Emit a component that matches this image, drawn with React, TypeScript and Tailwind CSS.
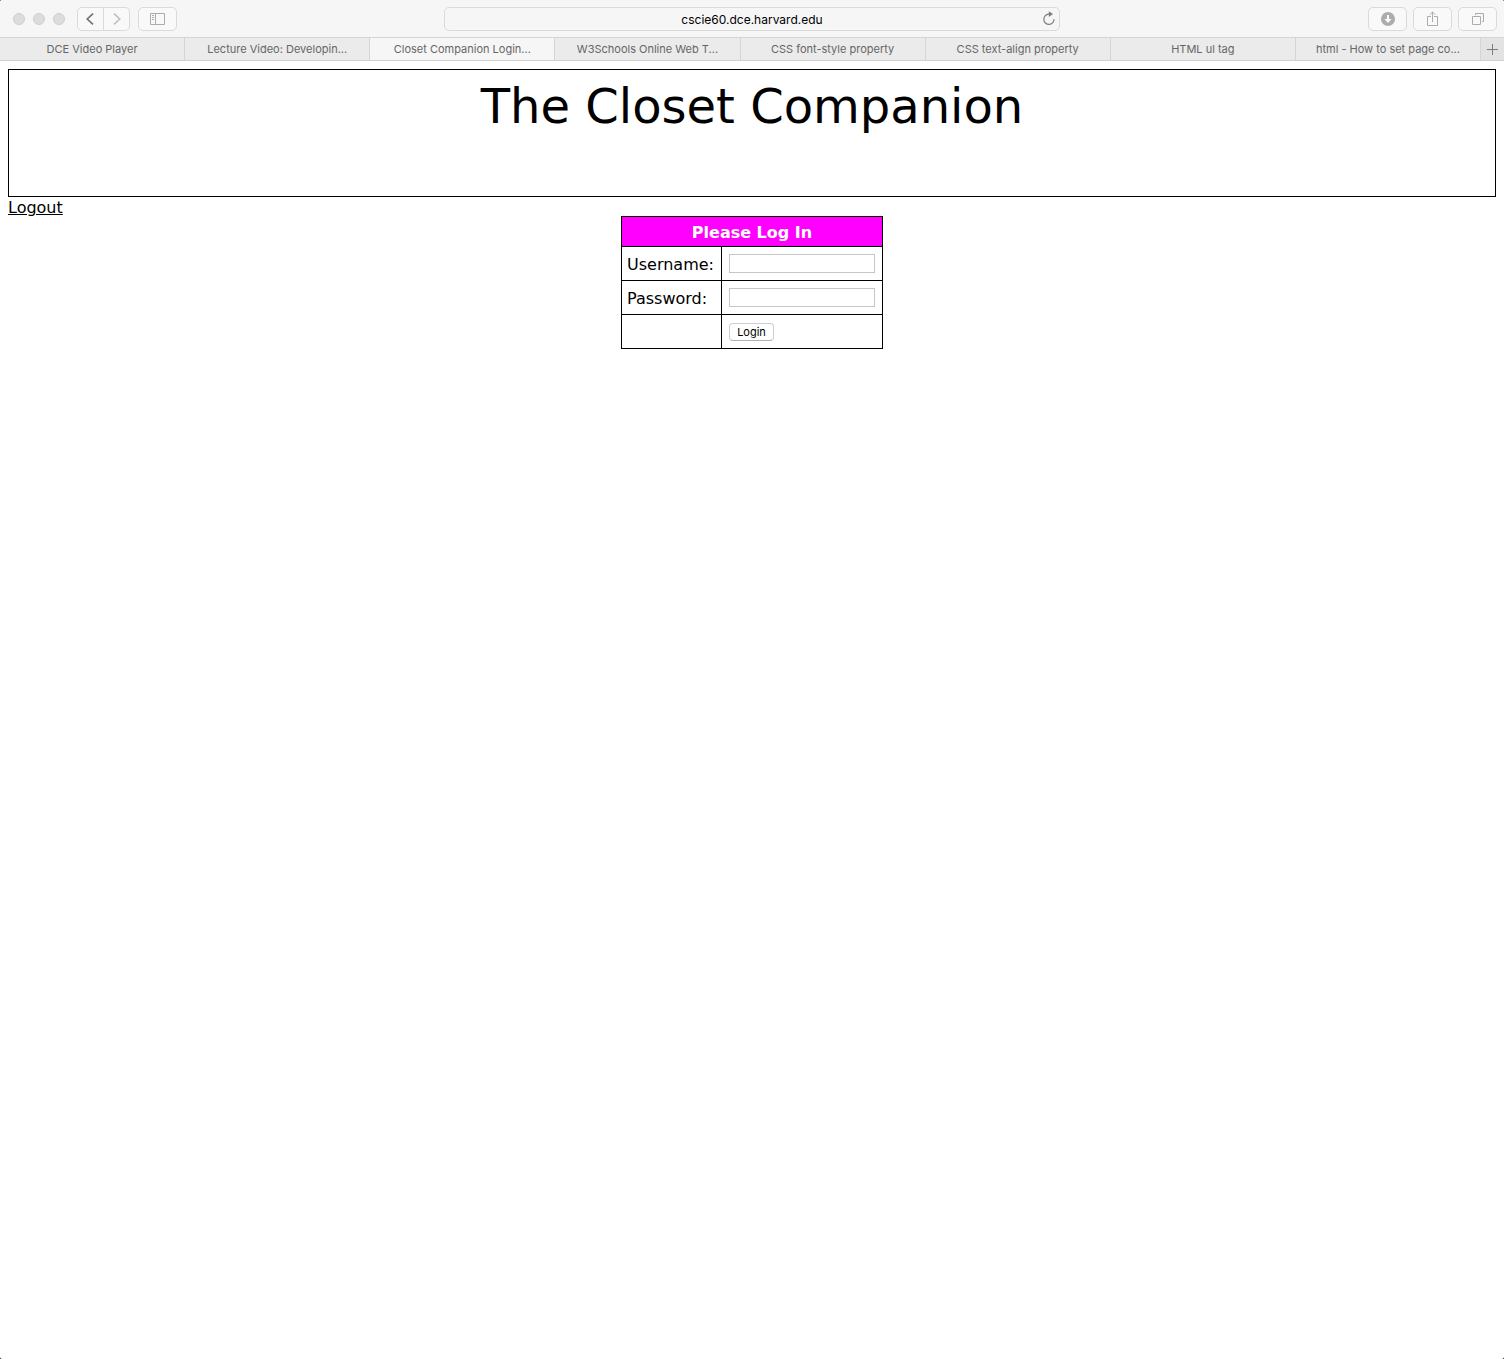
import type { ReactNode } from "react";

const tabs = [
  "DCE Video Player",
  "Lecture Video: Developin...",
  "Closet Companion Login...",
  "W3Schools Online Web T...",
  "CSS font-style property",
  "CSS text-align property",
  "HTML ul tag",
  "html - How to set page co...",
];

const activeTab = 2;

function ToolButton({ label, className, children }: { label: string; className: string; children: ReactNode }) {
  return (
    <button
      type="button"
      aria-label={label}
      className={`flex h-6 items-center justify-center border border-[#dadada] bg-[#f9f9f9] ${className}`}
    >
      {children}
    </button>
  );
}

function Toolbar() {
  return (
    <div className="grid grid-cols-[1fr_41%_1fr] items-center border-b border-[#d5d5d5] bg-[#f6f6f6] pt-[7px] pb-1.5">
      <div className="flex items-center pl-[13px]">
        <div className="flex gap-2">
          <span className="size-3 rounded-full border border-[#cfcfcf] bg-[#dcdcdc]" />
          <span className="size-3 rounded-full border border-[#cfcfcf] bg-[#dcdcdc]" />
          <span className="size-3 rounded-full border border-[#cfcfcf] bg-[#dcdcdc]" />
        </div>
        <div className="ml-3 flex">
          <ToolButton label="Back" className="w-[27px] rounded-l-[5px]">
            <svg width="9" height="12" viewBox="0 0 9 12" fill="none" stroke="#6f6f6f" strokeWidth="1.6">
              <path d="M7 .6 1.2 6 7 11.4" />
            </svg>
          </ToolButton>
          <ToolButton label="Forward" className="w-[26px] rounded-r-[5px] border-l-0">
            <svg width="8" height="12" viewBox="0 0 8 12" fill="none" stroke="#bebebe" strokeWidth="1.5">
              <path d="M1 .6 6.8 6 1 11.4" />
            </svg>
          </ToolButton>
        </div>
        <ToolButton label="Show sidebar" className="ml-2 w-[39px] rounded-[5px]">
          <svg width="15" height="12" viewBox="0 0 15 12" fill="none" stroke="#acacac">
            <path d="M.5.5h14v11H.5zM5.5.5v11M2 2.5h2M2 4.5h2M2 6.5h2" />
          </svg>
        </ToolButton>
      </div>

      <div className="relative">
        <input
          type="text"
          aria-label="Address"
          defaultValue="cscie60.dce.harvard.edu"
          className="block h-6 w-full rounded-[5px] border border-[#dadada] bg-[#f6f6f6] text-center text-xs text-black outline-none"
        />
        <button type="button" aria-label="Reload" className="absolute top-1 right-1">
          <svg width="14" height="15" viewBox="0 0 14 15" fill="none">
            <path d="M8 3.2H6.6A5.1 5.1 0 1 0 12 8.2" stroke="#7c7c7c" strokeWidth="1.2" />
            <path d="M6.8.3v5.6l4.2-2.8z" fill="#7c7c7c" />
          </svg>
        </button>
      </div>

      <div className="flex justify-end gap-1.5 pr-[7px]">
        <ToolButton label="Downloads" className="w-[39px] rounded-[5px]">
          <svg width="14" height="14" viewBox="0 0 14 14">
            <circle cx="7" cy="7" r="7" fill="#acacac" />
            <path d="M6 3h2v4h2.6L7 11 3.4 7H6z" fill="#fafafa" />
          </svg>
        </ToolButton>
        <ToolButton label="Share" className="w-[39px] rounded-[5px]">
          <svg width="13" height="16" viewBox="0 0 13 16" fill="none" stroke="#acacac">
            <path d="M5 5.5H1.5v9h10v-9H8M6.5 11V1M3.8 3.7 6.5 1l2.7 2.7" />
          </svg>
        </ToolButton>
        <ToolButton label="Show all tabs" className="w-[39px] rounded-[5px]">
          <svg width="13" height="12" viewBox="0 0 13 12" fill="none" stroke="#acacac">
            <path d="M1.5 3.5h8v8h-8zM4.5 2V.5h8v8H11" />
          </svg>
        </ToolButton>
      </div>
    </div>
  );
}

function TabBar() {
  return (
    <div className="flex h-[23px] border-b border-[#d0d0d0] bg-[#ebebeb] text-[11px] text-[#666666]">
      {tabs.map((tab, i) => (
        <button
          key={tab}
          type="button"
          className={`min-w-0 flex-1 truncate border-r border-[#d5d5d5] px-1 ${i === activeTab ? "bg-[#f6f6f6]" : "bg-[#ebebeb]"}`}
        >
          {tab}
        </button>
      ))}
      <button type="button" aria-label="New tab" className="flex w-[23px] items-center justify-center bg-[#e3e3e3]">
        <svg width="11" height="11" viewBox="0 0 11 11" stroke="#7c7c7c">
          <path d="M5.5 0v11M0 5.5h11" />
        </svg>
      </button>
    </div>
  );
}

function LoginForm() {
  return (
    <form onSubmit={(e) => e.preventDefault()}>
      <table className="mx-auto border-collapse border border-black">
        <thead>
          <tr className="h-[30px]">
            <th colSpan={2} className="border border-black bg-[#ff00ff] pt-0.5 text-base font-bold text-white">
              Please Log In
            </th>
          </tr>
        </thead>
        <tbody>
          <tr className="h-[34px]">
            <td className="w-[100px] border border-black pt-0.5 pl-[5px]">
              <label htmlFor="username">Username:</label>
            </td>
            <td className="border border-black px-[7px]">
              <input id="username" type="text" className="block h-[19px] w-[146px] border border-[#c6c6c6] px-1 text-[11px]" />
            </td>
          </tr>
          <tr className="h-[34px]">
            <td className="border border-black pt-0.5 pl-[5px]">
              <label htmlFor="password">Password:</label>
            </td>
            <td className="border border-black px-[7px]">
              <input id="password" type="password" className="block h-[19px] w-[146px] border border-[#c6c6c6] px-1 text-[11px]" />
            </td>
          </tr>
          <tr className="h-[34px]">
            <td className="border border-black" />
            <td className="border border-black px-[7px]">
              <button
                type="submit"
                className="block h-[18px] w-[45px] rounded border border-[#cecece] border-b-[#b2b2b2] bg-white font-['Inter',sans-serif] text-[11px] leading-4"
              >
                Login
              </button>
            </td>
          </tr>
        </tbody>
      </table>
    </form>
  );
}

export default function App() {
  return (
    <div className="min-h-screen bg-black">
      <div className="min-h-screen overflow-hidden rounded-xs bg-white">
        <header className="font-['Inter',sans-serif]">
          <Toolbar />
          <TabBar />
        </header>
        <main className="p-2 font-['DejaVu_Sans',sans-serif] text-base leading-5 text-black">
          <h1 className="h-32 border border-black pt-1.5 text-center text-5xl leading-[60px]">The Closet Companion</h1>
          <a href="#logout" className="block h-[19px] w-fit leading-[22px] underline">
            Logout
          </a>
          <LoginForm />
        </main>
      </div>
    </div>
  );
}
